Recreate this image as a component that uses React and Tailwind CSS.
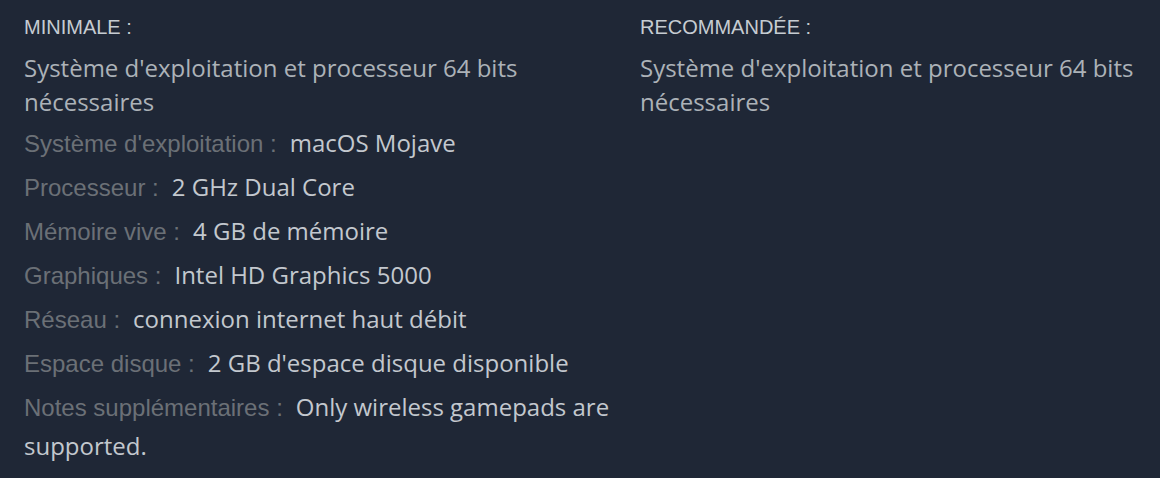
import React from 'react';

const minimum = [
    ["Système d'exploitation :", 'macOS Mojave'],
    ['Processeur :', '2 GHz Dual Core'],
    ['Mémoire vive :', '4 GB de mémoire'],
    ['Graphiques :', 'Intel HD Graphics 5000'],
    ['Réseau :', 'connexion internet haut débit'],
    ['Espace disque :', "2 GB d'espace disque disponible"],
    ['Notes supplémentaires :', 'Only wireless gamepads are supported.'],
];

const Column = ({ title, items }) => (
    <div>
        <div className="font-['Liberation_Sans',Arial,sans-serif] text-[20px] leading-[20px] text-[#c6ccd2] pt-[17px] mb-[14px]">
            {title}
        </div>
        <p className="font-['Open_Sans','Noto_Sans',sans-serif] text-[24px] leading-[34px] text-[#acb2b8]">
            Système d'exploitation et processeur 64 bits nécessaires
        </p>
        {items && (
            <ul className="mt-[4px]">
                {items.map(([label, value]) => (
                    <li
                        key={label}
                        className="font-['Open_Sans','Noto_Sans',sans-serif] text-[24px] leading-[39px] text-[#c3c8ce] mb-[5px]"
                    >
                        <span className="font-['Liberation_Sans',Arial,sans-serif] leading-[20px] text-[#6b7076] mr-[13px]">{label}</span>
                        {value}
                    </li>
                ))}
            </ul>
        )}
    </div>
);

export default function App() {
    return (
        <div className="w-[1160px] h-[478px] bg-[#1f2736] pl-[24px] grid grid-cols-[600px_1fr] gap-x-[16px] overflow-hidden">
            <Column title="MINIMALE :" items={minimum} />
            <Column title="RECOMMANDÉE :" />
        </div>
    );
}
